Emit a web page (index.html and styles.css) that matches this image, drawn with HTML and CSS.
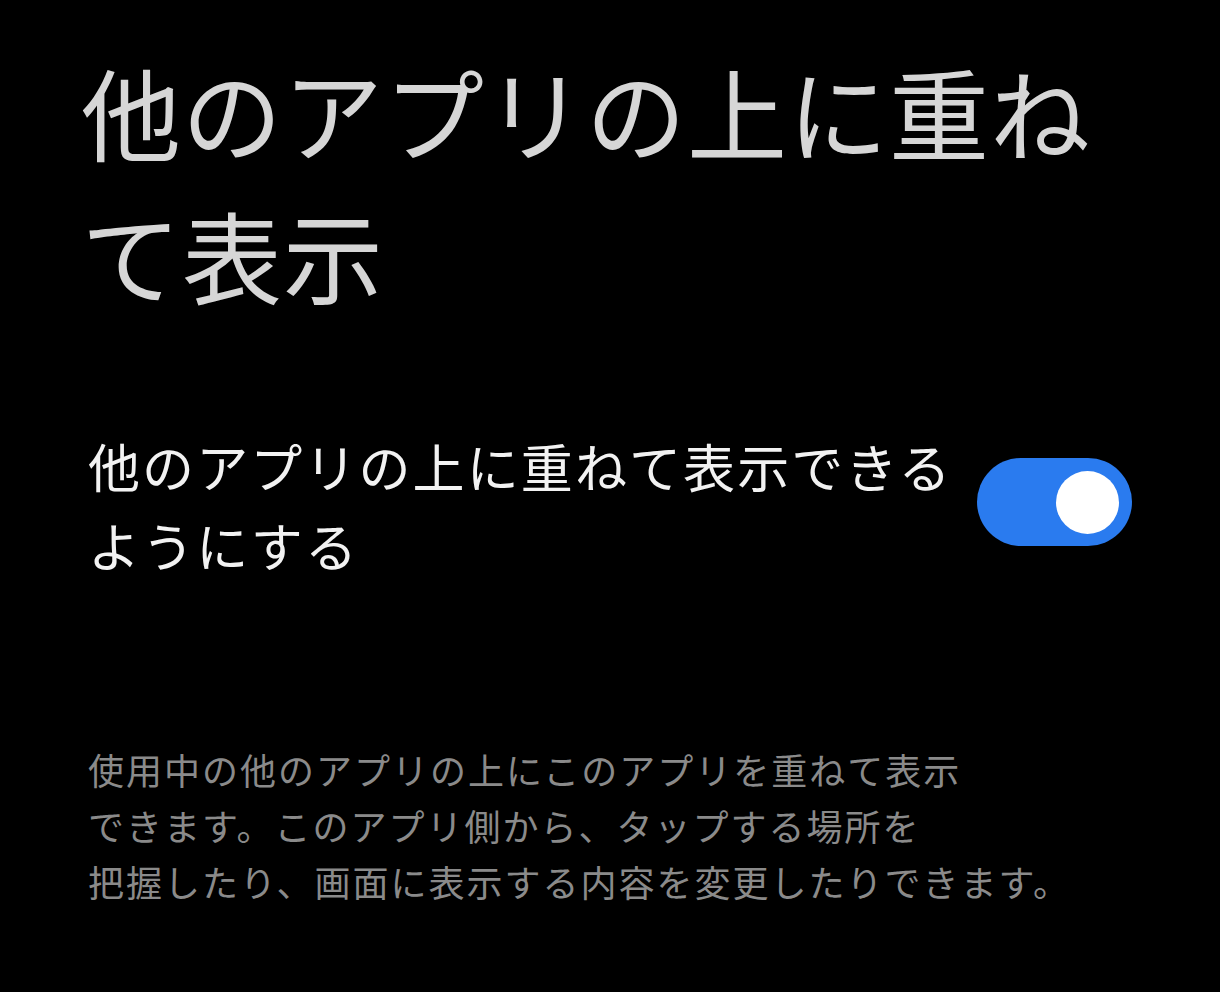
FILE: index.html
```html
<!DOCTYPE html>
<html lang="ja">
<head>
<meta charset="utf-8">
<link rel="stylesheet" href="styles.css">
</head>
<body>
<main class="page">
  <h1 class="title">他のアプリの上に重ねて表示</h1>
  <div class="row">
    <div class="label">他のアプリの上に重ねて表示できるようにする</div>
    <div class="switch" role="switch" aria-checked="true"><span class="knob"></span></div>
  </div>
  <p class="desc">使用中の他のアプリの上にこのアプリを重ねて表示<br>できます。このアプリ側から、タップする場所を<br>把握したり、画面に表示する内容を変更したりできます。</p>
</main>
</body>
</html>
```
FILE: styles.css
```css
html, body {
  margin: 0;
  padding: 0;
  background: #000;
}
body {
  width: 1220px;
  height: 992px;
  overflow: hidden;
  font-family: "Noto Sans CJK JP", "Noto Sans", sans-serif;
}
.page {
  padding: 39px 88px 0 88px;
  display: flex;
  flex-direction: column;
}
.title {
  margin: 0 0 0 -7px;
  font-size: 100px;
  font-weight: 400;
  letter-spacing: 1px;
  line-height: 143px;
  color: #d6d6d6;
  max-width: 1030px;
}
.row {
  margin-top: 101px;
  display: flex;
  align-items: center;
  gap: 16px;
}
.label {
  flex: 1;
  font-size: 52px;
  letter-spacing: 2.1px;
  line-height: 79px;
  color: #f2f2f2;
}
.switch {
  flex: none;
  width: 155px;
  height: 88px;
  margin-top: -6px;
  border-radius: 44px;
  background: #2a7bef;
  display: flex;
  align-items: center;
  justify-content: flex-end;
  padding-right: 13px;
  box-sizing: border-box;
}
.knob {
  width: 63px;
  height: 63px;
  border-radius: 50%;
  background: #fff;
}
.desc {
  margin: 157px 0 0 0;
  font-size: 36px;
  letter-spacing: 2px;
  line-height: 56px;
  color: #8a8a8a;
  white-space: nowrap;
}
```
